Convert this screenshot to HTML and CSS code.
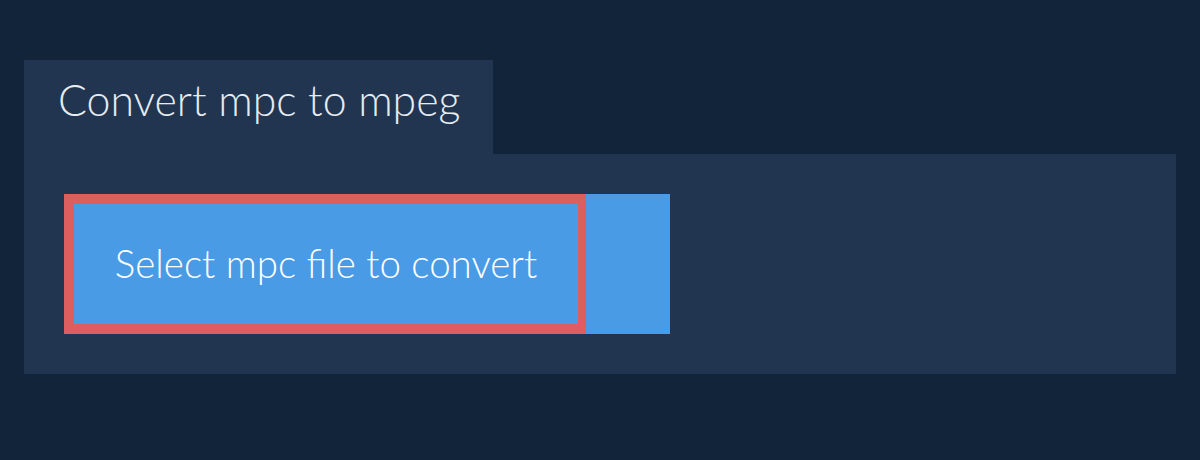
FILE: index.html
```html
<!DOCTYPE html>
<html>
<head>
<meta charset="utf-8">
<link rel="stylesheet" href="styles.css">
</head>
<body>
<div class="wrap">
  <div class="tab">Convert mpc to mpeg</div>
  <div class="panel">
    <div class="btn">
      <div class="btn-main">Select mpc file to convert</div>
      <div class="btn-side"></div>
    </div>
  </div>
</div>
</body>
</html>
```
FILE: styles.css
```css
html, body {
  margin: 0;
  padding: 0;
  background: #11243a;
  width: 1200px;
  height: 460px;
  overflow: hidden;
  font-family: "Lato Light", Lato, "Open Sans", sans-serif;
  font-weight: 300;
}
.wrap {
  padding: 60px 24px 0 24px;
  display: flex;
  flex-direction: column;
  align-items: flex-start;
}
.tab {
  background: #213550;
  color: #e6ebf0;
  font-size: 42.8px;
  height: 94px;
  box-sizing: border-box;
  padding: 0 34px 14px 34px;
  display: flex;
  align-items: center;
  width: 469px;
  line-height: 1;
  white-space: nowrap;
}
.panel {
  background: #213550;
  width: 1152px;
  height: 220px;
  box-sizing: border-box;
  padding: 40px;
}
.btn {
  display: flex;
  height: 140px;
  background: #4a9be6;
  width: 606px;
}
.btn-main {
  width: 522px;
  box-sizing: border-box;
  border: solid #dc5e5e;
  border-width: 10px 8px 10px 10px;
  color: #ffffff;
  font-size: 38.5px;
  display: flex;
  align-items: center;
  justify-content: center;
  padding-bottom: 2px;
  white-space: nowrap;
}
.btn-side {
  flex: 1;
}
```
